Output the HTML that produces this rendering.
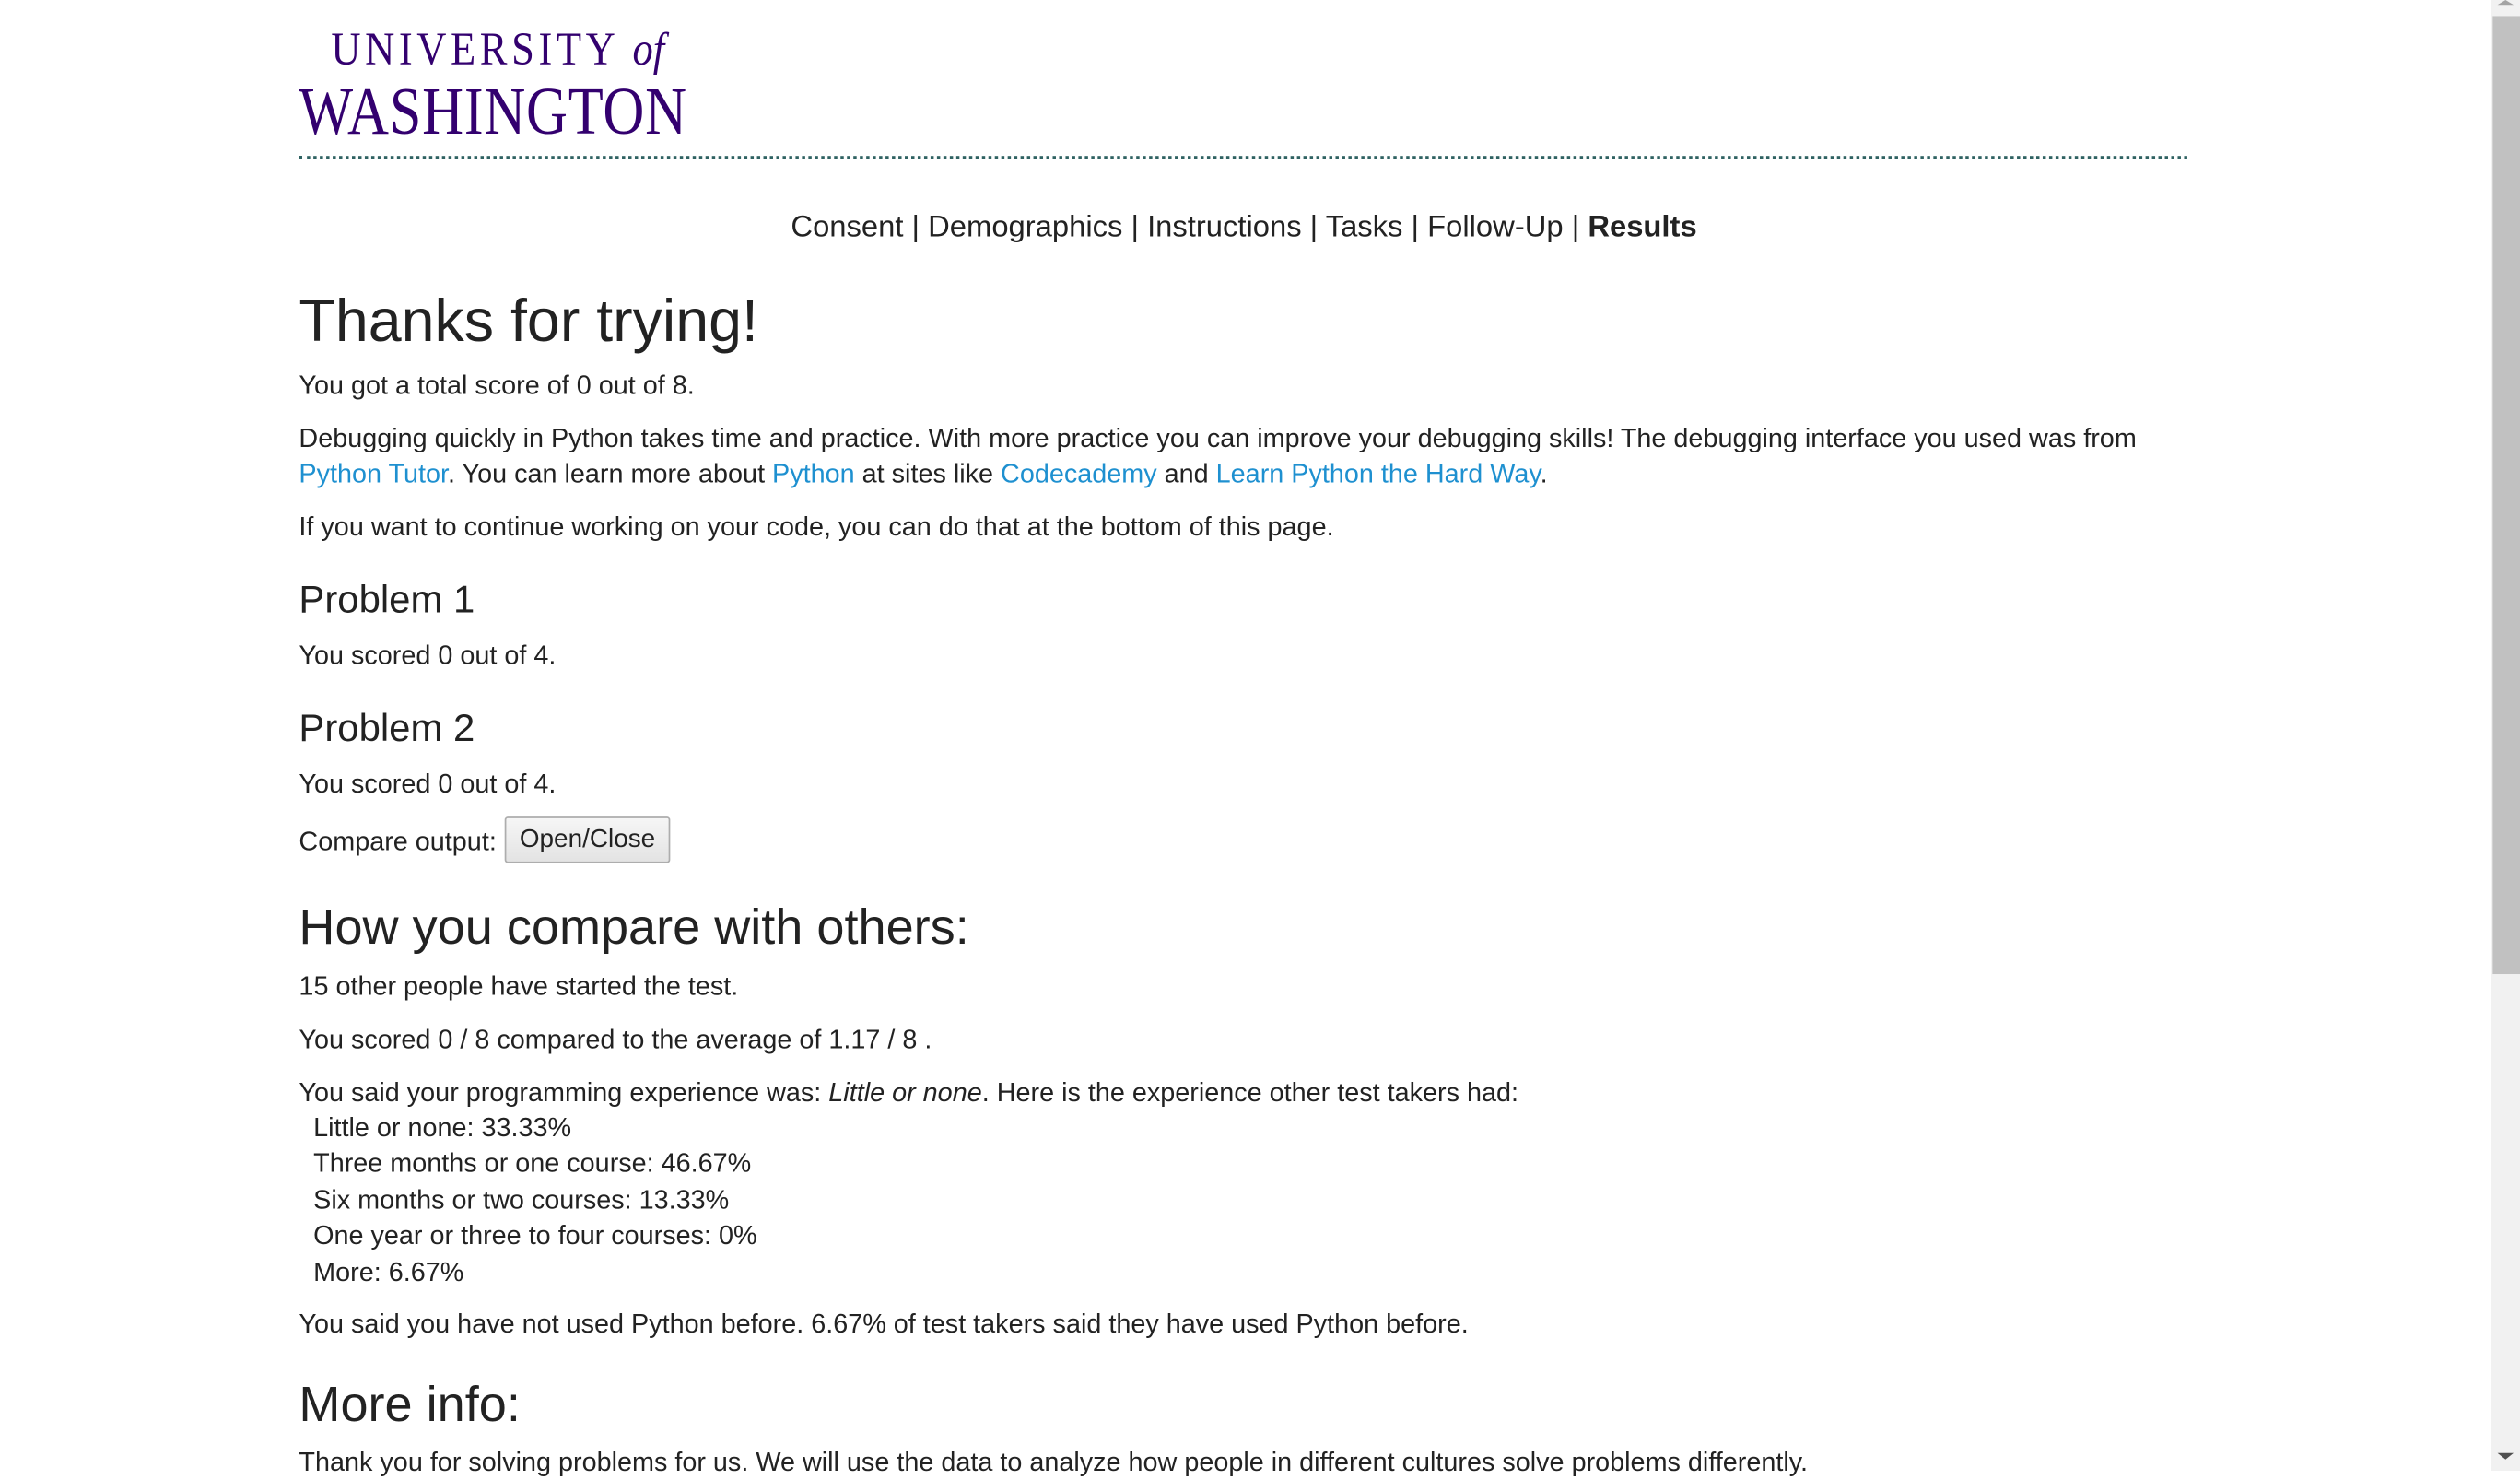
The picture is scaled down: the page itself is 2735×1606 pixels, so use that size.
<!DOCTYPE html>
<html><head><meta charset="utf-8"><style>
html,body{margin:0;padding:0;background:#fff;overflow:hidden;width:2735px;height:1596px}
#w{position:absolute;left:0;top:0;width:1568px;height:915px;transform:scale(1.74426);transform-origin:0 0;font-family:"Liberation Sans",sans-serif;color:#222}
.a{position:absolute;white-space:nowrap}
.t{font-size:16.5px;line-height:22px;left:186px}
a{color:#1e90d0;text-decoration:none}
.logo{color:#33006f;font-family:"Liberation Serif",serif;transform-origin:0 0}
</style></head><body><div id="w">
<div class="a logo" style="left:206px;top:15px;font-size:29px;letter-spacing:3px;transform:scaleX(0.88)">UNIVERSITY <i style="letter-spacing:0">of</i></div>
<div class="a logo" style="left:186px;top:46px;font-size:42px;letter-spacing:0.5px;transform:scaleX(0.85)">WASHINGTON</div>
<div class="a" style="left:186px;top:97px;width:1175px;border-top:2px dotted #2f6262"></div>
<div class="a" style="left:0;width:1548px;text-align:center;top:128px;font-size:18.8px;line-height:26px">Consent | Demographics | Instructions | Tasks | Follow-Up | <b>Results</b></div>
<div class="a" style="left:186px;top:177px;font-size:37px;line-height:46px">Thanks for trying!</div>
<div class="a t" style="top:229px">You got a total score of 0 out of 8.</div>
<div class="a t" style="top:262px">Debugging quickly in Python takes time and practice. With more practice you can improve your debugging skills! The debugging interface you used was from</div>
<div class="a t" style="top:284px"><a>Python Tutor</a>. You can learn more about <a>Python</a> at sites like <a>Codecademy</a> and <a>Learn Python the Hard Way</a>.</div>
<div class="a t" style="top:317px">If you want to continue working on your code, you can do that at the bottom of this page.</div>
<div class="a" style="left:186px;top:359px;font-size:24px;line-height:30px">Problem 1</div>
<div class="a t" style="top:397px">You scored 0 out of 4.</div>
<div class="a" style="left:186px;top:439px;font-size:24px;line-height:30px">Problem 2</div>
<div class="a t" style="top:477px">You scored 0 out of 4.</div>
<div class="a t" style="top:513px">Compare output:</div>
<div class="a" style="left:314px;top:508px;width:101px;height:27px;border:1px solid #adadad;border-radius:2px;background:linear-gradient(#f6f6f6,#e3e3e3);font-size:16px;line-height:28px;text-align:center">Open/Close</div>
<div class="a" style="left:186px;top:557px;font-size:31px;line-height:40px">How you compare with others:</div>
<div class="a t" style="top:603px">15 other people have started the test.</div>
<div class="a t" style="top:636px">You scored 0 / 8 compared to the average of 1.17 / 8 .</div>
<div class="a t" style="top:669px">You said your programming experience was: <i>Little or none</i>. Here is the experience other test takers had:</div>
<div class="a t" style="top:691px;left:195px">Little or none: 33.33%</div>
<div class="a t" style="top:713px;left:195px">Three months or one course: 46.67%</div>
<div class="a t" style="top:736px;left:195px">Six months or two courses: 13.33%</div>
<div class="a t" style="top:758px;left:195px">One year or three to four courses: 0%</div>
<div class="a t" style="top:781px;left:195px">More: 6.67%</div>
<div class="a t" style="top:813px">You said you have not used Python before. 6.67% of test takers said they have used Python before.</div>
<div class="a" style="left:186px;top:854px;font-size:31px;line-height:40px">More info:</div>
<div class="a t" style="top:899px">Thank you for solving problems for us. We will use the data to analyze how people in different cultures solve problems differently.</div>
<div class="a" style="left:1550px;top:0;width:18px;height:915px;background:#f1f1f1"></div>
<div class="a" style="left:1551px;top:10px;width:17px;height:596px;background:#c1c1c1"></div>
<div class="a" style="left:1554px;top:0;width:0;height:0;border-left:5px solid transparent;border-right:5px solid transparent;border-bottom:3px solid #a3a3a3"></div>
<div class="a" style="left:1554px;top:904px;width:0;height:0;border-left:5px solid transparent;border-right:5px solid transparent;border-top:4px solid #505050"></div>
</div></body></html>
